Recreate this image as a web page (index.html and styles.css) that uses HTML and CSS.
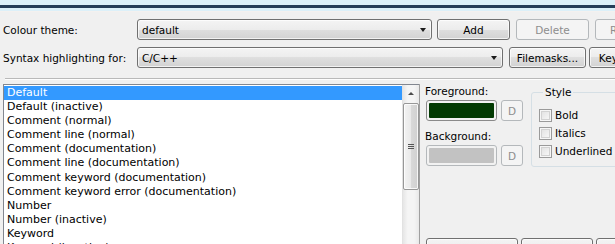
FILE: index.html
```html
<!DOCTYPE html>
<html>
<head>
    <meta charset="UTF-8">
    <title>Syntax highlighting</title>
    <link rel="stylesheet" href="styles.css">
</head>
<body>
    <div class="title-strip"></div>

    <div class="toolbar">
        <div class="row">
            <span class="label">Colour theme:</span>
            <div class="combo theme-combo"><span>default</span><i class="arrow"></i></div>
            <button class="btn add-btn">Add</button>
            <button class="btn delete-btn" disabled>Delete</button>
            <button class="btn rename-btn" disabled>Rename</button>
        </div>
        <div class="row">
            <span class="label">Syntax highlighting for:</span>
            <div class="combo lang-combo"><span>C/C++</span><i class="arrow"></i></div>
            <button class="btn masks-btn">Filemasks...</button>
            <button class="btn keys-btn">Keywords...</button>
        </div>
    </div>

    <div class="separator"></div>

    <div class="main">
        <div class="listbox">
            <ul class="items">
                <li class="selected">Default</li>
                <li>Default (inactive)</li>
                <li>Comment (normal)</li>
                <li>Comment line (normal)</li>
                <li>Comment (documentation)</li>
                <li>Comment line (documentation)</li>
                <li>Comment keyword (documentation)</li>
                <li>Comment keyword error (documentation)</li>
                <li>Number</li>
                <li>Number (inactive)</li>
                <li>Keyword</li>
                <li>Keyword (inactive)</li>
            </ul>
            <div class="scrollbar">
                <div class="scroll-up"><i class="up-arrow"></i></div>
                <div class="thumb"><i class="grip"></i></div>
            </div>
        </div>

        <div class="panel">
            <div class="panel-top">
                <div class="colours">
                    <div class="colour-label">Foreground:</div>
                    <div class="colour-row">
                        <div class="swatch fg"><span></span></div>
                        <button class="btn d-btn" disabled>D</button>
                    </div>
                    <div class="colour-label bg-label">Background:</div>
                    <div class="colour-row">
                        <div class="swatch bg"><span></span></div>
                        <button class="btn d-btn" disabled>D</button>
                    </div>
                </div>

                <fieldset class="style-group">
                    <legend>Style</legend>
                    <label class="check"><span class="box"></span>Bold</label>
                    <label class="check"><span class="box"></span>Italics</label>
                    <label class="check"><span class="box"></span>Underlined</label>
                </fieldset>
            </div>

            <div class="bottom-buttons">
                <button class="btn wide-btn"></button>
                <button class="btn mid-btn"></button>
                <button class="btn mid-btn"></button>
            </div>
        </div>
    </div>
</body>
</html>
```

FILE: styles.css
```css
body {
    margin: 0;
    width: 615px;
    height: 244px;
    overflow: hidden;
    background-color: #f0f0f0;
    font-family: "DejaVu Sans", sans-serif;
    font-size: 10.5px;
    color: #000;
}

.title-strip {
    height: 12px;
    background: linear-gradient(#dcf0f9 0 5px, #253d58 5px 8px, #dcf0f9 8px 11px, #f4f1ef 11px);
}

/* top rows */
.toolbar {
    display: flex;
    flex-direction: column;
    gap: 7px;
    padding: 7px 0 0 3px;
}

.row {
    display: flex;
    align-items: center;
    height: 21px;
    white-space: nowrap;
}

.label {
    width: 134px;
    flex-shrink: 0;
}

.combo, .btn {
    box-sizing: border-box;
    height: 21px;
    border: 1px solid #707070;
    border-radius: 3px;
    background: linear-gradient(#f4f4f4, #ececec 50%, #dfdfdf 50%, #d2d2d2);
    box-shadow: inset 0 0 0 1px rgba(255, 255, 255, 0.7);
    flex-shrink: 0;
}

.combo {
    display: flex;
    align-items: center;
    padding: 0 4px 0 4px;
}

.theme-combo {
    width: 295px;
    margin-right: 5px;
}

.lang-combo {
    width: 366px;
    margin-right: 6px;
}

.arrow {
    margin-left: auto;
    margin-right: 1px;
    width: 0;
    height: 0;
    border-left: 3.5px solid transparent;
    border-right: 3.5px solid transparent;
    border-top: 4px solid #1a1a1a;
}

.btn {
    font: inherit;
    color: #000;
    padding: 0;
}

.btn:disabled {
    border-color: #b4b8bb;
    background: #f4f4f4;
    box-shadow: none;
    color: #8d8d8d;
}

.add-btn, .delete-btn {
    width: 73px;
    margin-right: 6px;
}

.rename-btn {
    width: 73px;
}

.masks-btn {
    width: 77px;
    margin-right: 3px;
}

.keys-btn {
    width: 80px;
}

.separator {
    margin: 10px 0 0 5px;
    border-top: 1px solid #b9b9b9;
    border-bottom: 1px solid #fdfdfd;
}

/* list + panel */
.main {
    display: flex;
    margin-top: 4px;
    padding-left: 3px;
}

.listbox {
    box-sizing: border-box;
    width: 417px;
    height: 172px;
    border: 1px solid #828790;
    background-color: #fff;
    display: flex;
    flex-shrink: 0;
}

.items {
    flex: 1;
    list-style: none;
    margin: 0;
    padding: 1px 0 0 0;
    font-size: 11px;
    line-height: 14.1px;
}

.items li {
    padding-left: 3px;
    white-space: nowrap;
}

.items li.selected {
    background-color: #3399ff;
    color: #fff;
}

.scrollbar {
    width: 17px;
    background: linear-gradient(90deg, #e6e6e6, #f5f5f5 30%, #f5f5f5 70%, #e9e9e9);
    border-left: 1px solid #e2e2e2;
    box-sizing: border-box;
}

.scroll-up {
    height: 17px;
    display: flex;
    justify-content: center;
    align-items: center;
}

.up-arrow {
    width: 0;
    height: 0;
    border-left: 3px solid transparent;
    border-right: 3px solid transparent;
    border-bottom: 3px solid #4d4d4d;
}

.thumb {
    box-sizing: border-box;
    height: 87px;
    margin: 1px 0 0 0;
    border: 1px solid #979797;
    border-radius: 2px;
    background: linear-gradient(90deg, #f3f3f3, #e9e9e9 50%, #d9d9d9 50%, #d0d0d0);
    box-shadow: inset 0 0 0 1px rgba(255, 255, 255, 0.8);
    display: flex;
    justify-content: center;
    align-items: center;
}

.grip {
    width: 6px;
    height: 5px;
    background: linear-gradient(#555 0 1px, transparent 1px 2px, #555 2px 3px, transparent 3px 4px, #555 4px 5px);
}

.panel {
    padding-left: 5px;
    border-left: 1px solid #a0a0a0;
    margin-left: -1px;
    flex: 1;
}

.panel-top {
    display: flex;
    align-items: flex-start;
}

.colours {
    width: 98px;
    flex-shrink: 0;
}

.colour-label {
    line-height: 13px;
    padding-top: 1px;
    margin-bottom: 2px;
}

.bg-label {
    margin-top: 8px;
}

.colour-row {
    display: flex;
    gap: 4px;
    padding-left: 1px;
}

.swatch {
    box-sizing: border-box;
    width: 71px;
    height: 21px;
    border: 1px solid #8a8a8a;
    border-radius: 3px;
    padding: 2px;
    background-color: #f2f2f2;
}

.swatch span {
    display: block;
    height: 100%;
    border-radius: 1px;
}

.swatch.fg span {
    background-color: #023a02;
}

.swatch.bg {
    border-color: #b4b8bb;
}

.swatch.bg span {
    background-color: #c2c2c2;
}

.d-btn {
    width: 22px;
}

.style-group {
    margin: 2px 0 0 8px;
    padding: 7px 0 6px 7px;
    width: 100px;
    flex-shrink: 0;
    border: 1px solid #d5dfe5;
    border-radius: 3px;
}

.style-group legend {
    padding: 0 2px;
    margin-left: 4px;
    line-height: 13px;
}

.check {
    display: flex;
    align-items: center;
    height: 18px;
    gap: 3px;
    white-space: nowrap;
}

.box {
    box-sizing: border-box;
    width: 13px;
    height: 13px;
    border: 1px solid #9a9a9a;
    background: linear-gradient(135deg, #dedede, #fbfbfb);
    box-shadow: inset 0 0 0 1px #f6f6f6, inset 0 0 0 2px #d2d2d2;
}

.bottom-buttons {
    display: flex;
    gap: 3px;
    margin: 71px 0 0 1px;
}

.bottom-buttons .btn {
    height: 23px;
}

.wide-btn {
    width: 92px;
}

.mid-btn {
    width: 72px;
}
```
